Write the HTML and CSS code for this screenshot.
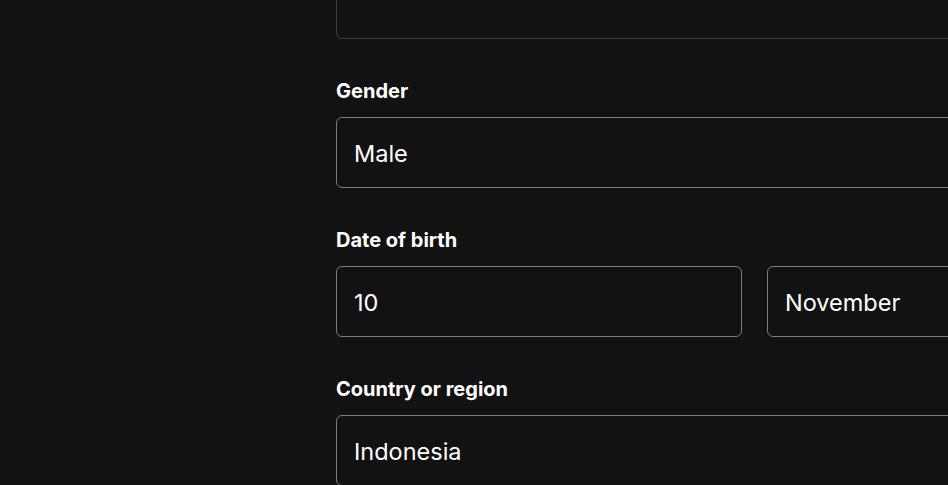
FILE: index.html
```html
<!DOCTYPE html>
<html lang="en">
<head>
<meta charset="utf-8">
<title>Edit profile</title>
<link rel="stylesheet" href="styles.css">
</head>
<body>
<main class="page">
  <form class="form">
    <div class="field">
      <div class="input input-disabled"></div>
    </div>
    <div class="field">
      <label class="label">Gender</label>
      <div class="input">Male</div>
    </div>
    <div class="field">
      <label class="label">Date of birth</label>
      <div class="row">
        <div class="input">10</div>
        <div class="input">November</div>
        <div class="input">1998</div>
      </div>
    </div>
    <div class="field">
      <label class="label">Country or region</label>
      <div class="input">Indonesia</div>
    </div>
  </form>
</main>
</body>
</html>
```
FILE: styles.css
```css
html, body {
  margin: 0;
  padding: 0;
  background: #121212;
  overflow: hidden;
  height: 100%;
}
.page {
  padding-left: 336px;
  font-family: Inter, "Noto Sans", sans-serif;
  color: #ffffff;
}
.form {
  width: 1268px;
  margin-top: -32px;
  display: flex;
  flex-direction: column;
  gap: 40px;
}
.field {
  display: flex;
  flex-direction: column;
}
.label {
  font-size: 20px;
  font-weight: 700;
  line-height: 24px;
  margin-bottom: 14px;
  letter-spacing: 0;
}
.row {
  display: grid;
  grid-template-columns: 406px 406px 406px;
  gap: 25px;
}
.input {
  box-sizing: border-box;
  height: 71px;
  border: 1.5px solid #7c7c7c;
  border-radius: 6px;
  padding: 2px 17px 0;
  display: flex;
  align-items: center;
  font-size: 23.5px;
  color: #ffffff;
  overflow: hidden;
  white-space: nowrap;
}
.input-disabled {
  border-color: #3d3d3d;
}
```
